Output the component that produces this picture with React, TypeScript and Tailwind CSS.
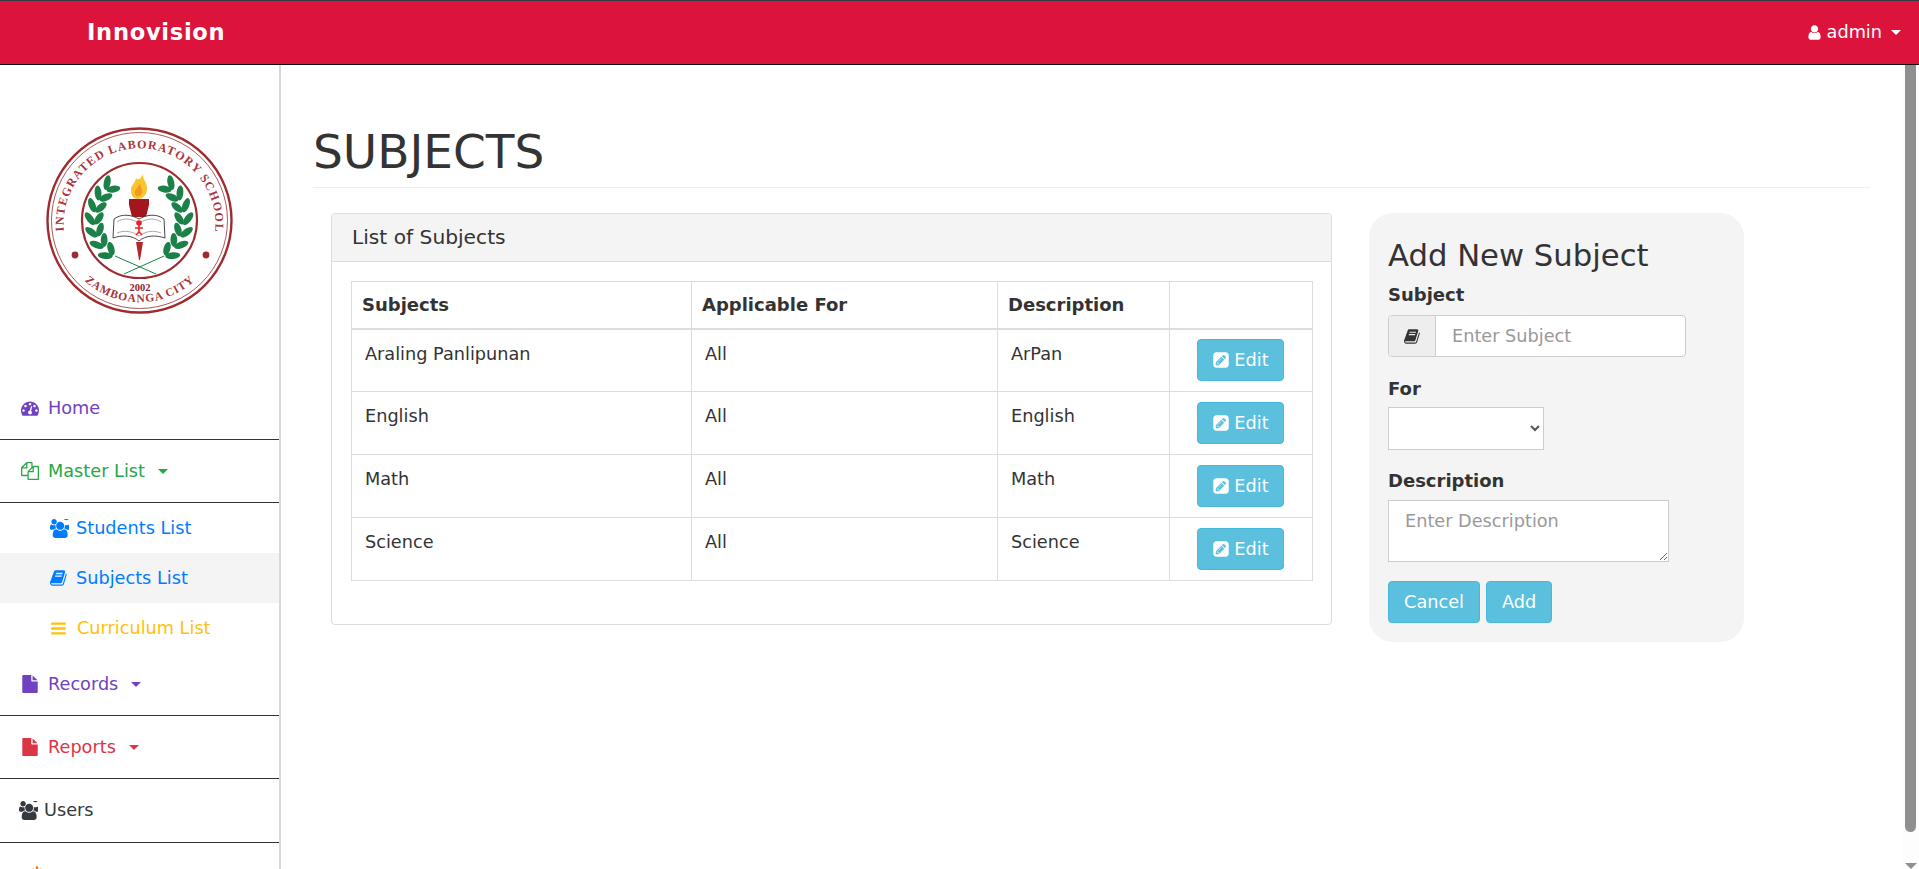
import React from 'react';

// Font Awesome 4 glyphs, the set the page uses
const paths = {
  book: 'M1639 478q40 57 18 129l-275 906q-19 64-76.5 107.5t-122.5 43.5h-923q-77 0-148.5-53.5t-99.5-131.5q-24-67-2-127 0-4 3-27t4-37q1-8-3-21.5t-3-19.5q2-11 8-21t16.5-23.5 16.5-23.5q23-38 45-91.5t30-91.5q3-10 .5-30t-.5-28q3-11 17-28t17-23q21-36 42-92t25-90q1-9-2.5-32t.5-28q4-13 22-30.5t22-22.5q19-26 42.5-84.5t27.5-96.5q1-8-3-25.5t-2-26.5q2-8 9-18t18-23 17-21q8-12 16.5-30.5t15-35 16-36 19.5-32 26.5-23.5 36-11.5 47.5 5.5l-1 3q38-9 51-9h761q74 0 114 56t18 130l-274 906q-36 119-71.5 153.5t-128.5 34.5h-869q-27 0-38 15-11 16-1 43 24 70 144 70h923q29 0 56-15.5t35-41.5l300-987q7-22 5-57 38 15 59 43zm-1064 2q-4 13 2 22.5t20 9.5h608q13 0 25.5-9.5t16.5-22.5l21-64q4-13-2-22.5t-20-9.5h-608q-13 0-25.5 9.5t-16.5 22.5zm-83 256q-4 13 2 22.5t20 9.5h608q13 0 25.5-9.5t16.5-22.5l21-64q4-13-2-22.5t-20-9.5h-608q-13 0-25.5 9.5t-16.5 22.5z',
  files: 'M1696 384q40 0 68 28t28 68v1216q0 40-28 68t-68 28h-960q-40 0-68-28t-28-68v-288h-544q-40 0-68-28t-28-68v-672q0-40 20-88t48-76l408-408q28-28 76-48t88-20h416q40 0 68 28t28 68v328q68-40 128-40h416zm-544 213l-299 299h299v-299zm-640-384l-299 299h299v-299zm196 647l316-316v-416h-384v416q0 40-28 68t-68 28h-416v640h512v-256q0-40 20-88t48-76zm956 804v-1152h-384v416q0 40-28 68t-68 28h-416v640h896z',
  users: 'M593 896q-162 5-265 128h-134q-82 0-138-40.5t-56-118.5q0-353 124-353 6 0 43.5 21t97.5 42.5 119 21.5q67 0 133-23-5 37-5 66 0 139 81 256zm1071 637q0 120-73 189.5t-194 69.5h-874q-121 0-194-69.5t-73-189.5q0-53 3.5-103.5t14-109 26.5-108.5 43-97.5 62-81 85.5-53.5 111.5-20q10 0 43 21.5t73 48 107 48 135 21.5 135-21.5 107-48 73-48 43-21.5q61 0 111.5 20t85.5 53.5 62 81 43 97.5 26.5 108.5 14 109 3.5 103.5zm-1024-1277q0 106-75 181t-181 75-181-75-75-181 75-181 181-75 181 75 75 181zm704 384q0 159-112.5 271.5t-271.5 112.5-271.5-112.5-112.5-271.5 112.5-271.5 271.5-112.5 271.5 112.5 112.5 271.5zm576 225q0 78-56 118.5t-138 40.5h-134q-103-123-265-128 81-117 81-256 0-29-5-66 66 23 133 23 59 0 119-21.5t97.5-42.5 43.5-21q124 0 124 353zm-128-993q0 106-75 181t-181 75-181-75-75-181 75-181 181-75 181 75 75 181z',
  user: 'M1536 1399q0 109-62.5 187t-150.5 78h-854q-88 0-150.5-78t-62.5-187q0-85 8.5-160.5t31.5-152 58.5-131 94-89 134.5-34.5q131 128 313 128t313-128q76 0 134.5 34.5t94 89 58.5 131 31.5 152 8.5 160.5zm-256-887q0 159-112.5 271.5t-271.5 112.5-271.5-112.5-112.5-271.5 112.5-271.5 271.5-112.5 271.5 112.5 112.5 271.5z',
  edit: 'M532 1108l152 152-52 52h-56v-96h-96v-56zm414-390q14 13-3 30l-291 291q-17 17-30 3-14-13 3-30l291-291q17-17 30-3zm-274 690l544-544-288-288-544 544v288h288zm608-608l92-92q28-28 28-68t-28-68l-152-152q-28-28-68-28t-68 28l-92 92 288 288zm384-384v960q0 119-84.5 203.5t-203.5 84.5h-960q-119 0-203.5-84.5t-84.5-203.5v-960q0-119 84.5-203.5t203.5-84.5h960q119 0 203.5 84.5t84.5 203.5z',
  dashboard: 'M384 1152q0-53-37.5-90.5t-90.5-37.5-90.5 37.5-37.5 90.5 37.5 90.5 90.5 37.5 90.5-37.5 37.5-90.5zm192-448q0-53-37.5-90.5t-90.5-37.5-90.5 37.5-37.5 90.5 37.5 90.5 90.5 37.5 90.5-37.5 37.5-90.5zm428 481l101-382q6-26-7.5-48.5t-38.5-29.5-48 6.5-30 39.5l-101 382q-60 5-107 43.5t-63 98.5q-20 77 20 146t117 89 146-20 89-117q16-60-6-117t-72-91zm660-33q0-53-37.5-90.5t-90.5-37.5-90.5 37.5-37.5 90.5 37.5 90.5 90.5 37.5 90.5-37.5 37.5-90.5zm-640-640q0-53-37.5-90.5t-90.5-37.5-90.5 37.5-37.5 90.5 37.5 90.5 90.5 37.5 90.5-37.5 37.5-90.5zm448 192q0-53-37.5-90.5t-90.5-37.5-90.5 37.5-37.5 90.5 37.5 90.5 90.5 37.5 90.5-37.5 37.5-90.5zm320 448q0 261-141 483-19 29-54 29h-1402q-35 0-54-29-141-221-141-483 0-182 71-348t191-286 286-191 348-71 348 71 286 191 191 286 71 348z',
  bars: 'M1664 1344v128q0 26-19 45t-45 19h-1408q-26 0-45-19t-19-45v-128q0-26 19-45t45-19h1408q26 0 45 19t19 45zm0-512v128q0 26-19 45t-45 19h-1408q-26 0-45-19t-19-45v-128q0-26 19-45t45-19h1408q26 0 45 19t19 45zm0-512v128q0 26-19 45t-45 19h-1408q-26 0-45-19t-19-45v-128q0-26 19-45t45-19h1408q26 0 45 19t19 45z',
  file: 'M1152 512v-472q22 14 36 28l408 408q14 14 28 36h-472zm-128 32q0 40 28 68t68 28h544v1056q0 40-28 68t-68 28h-1344q-40 0-68-28t-28-68v-1600q0-40 28-68t68-28h800v544z',
  power: 'M1664 896q0 156-61 298t-164 245-245 164-298 61-298-61-245-164-164-245-61-298q0-182 80.5-343t226.5-270q43-32 95.5-25t83.5 50q32 42 24.5 94.5t-49.5 84.5q-98 74-151.5 181t-53.5 228q0 104 40.5 198.5t109.5 163.5 163.5 109.5 198.5 40.5 198.5-40.5 163.5-109.5 109.5-163.5 40.5-198.5q0-121-53.5-228t-151.5-181q-42-32-49.5-84.5t24.5-94.5q31-43 84-50t95 25q146 109 226.5 270t80.5 343zm-640-768v640q0 52-38 90t-90 38-90-38-38-90v-640q0-52 38-90t90-38 90 38 38 90z',
};

const Icon = ({ name, size = 18, className = '' }: { name: keyof typeof paths; size?: number; className?: string }) => (
  <svg width={size} height={size} viewBox="0 0 1792 1792" fill="currentColor" className={`shrink-0 ${className}`}>
    <path d={paths[name]} />
  </svg>
);

const Caret = () => (
  <span className="inline-block w-0 h-0 border-x-[5px] border-t-[5px] border-x-transparent border-t-current" />
);

// laurel leaves, positions along an arc round the crest
const leaves = [134, 150, 166, 182, 198, 214, 230].map(a => {
  const r = (a * Math.PI) / 180;
  return { a, x: 93 + 44 * Math.cos(r), y: 93 - 44 * Math.sin(r) };
});

const Laurel = () => (
  <g fill="#1b8148">
    {leaves.map(l => (
      <g key={l.a} transform={`rotate(${90 - l.a} ${l.x} ${l.y})`}>
        <ellipse cx={l.x + 3} cy={l.y - 5} rx="7.5" ry="3.4" transform={`rotate(-35 ${l.x + 3} ${l.y - 5})`} />
        <ellipse cx={l.x + 3} cy={l.y + 4} rx="7" ry="3.4" transform={`rotate(35 ${l.x + 3} ${l.y + 4})`} />
      </g>
    ))}
  </g>
);

const Logo = () => (
  <svg width="187" height="187" viewBox="0 0 187 187">
    <defs>
      <path id="arc-top" d="M 18 106 A 76 76 0 1 1 169 106" />
      <path id="arc-bottom" d="M 24.5 137 A 81.5 81.5 0 0 0 162.5 137" />
    </defs>
    <circle cx="93.5" cy="93.5" r="92" fill="#fff" stroke="#9e2b2f" strokeWidth="2.4" />
    <circle cx="93.5" cy="93.5" r="88" fill="none" stroke="#9e2b2f" strokeWidth="0.8" />
    <circle cx="93.5" cy="93.5" r="57.5" fill="none" stroke="#9e2b2f" strokeWidth="2.2" />
    <text fontFamily="'Liberation Serif', serif" fontWeight="700" fontSize="12" fill="#a8353a">
      <textPath href="#arc-top" startOffset="2" textLength="252" lengthAdjust="spacing">INTEGRATED LABORATORY SCHOOL</textPath>
    </text>
    <text fontFamily="'Liberation Serif', serif" fontWeight="700" fontSize="11.5" fill="#a8353a">
      <textPath href="#arc-bottom" startOffset="22" textLength="120" lengthAdjust="spacing">ZAMBOANGA CITY</textPath>
    </text>
    <text x="94" y="163.5" textAnchor="middle" fontFamily="'Liberation Serif', serif" fontWeight="700" fontSize="10.5" fill="#8f2226">2002</text>
    <circle cx="29" cy="128" r="3.4" fill="#9e2b2f" />
    <circle cx="160" cy="128" r="3.4" fill="#9e2b2f" />
    <Laurel />
    <g transform="translate(186 0) scale(-1 1)">
      <Laurel />
    </g>
    <path d="M69 129 L110 147 M118 129 L78 147" stroke="#1b8148" strokeWidth="1" fill="none" />
    <path d="M90 115 H97 L94 133 H93 Z" fill="#b3262a" />
    <path d="M97 47 C97 54 102 56 101 63 C100 69 96 72 92 72 C87 72 85 68 85 63 C85 58 89 57 90 51 C92 54 95 52 97 47 Z" fill="#f7c52e" />
    <path d="M94 56 C94 60 97 62 96 66 C95 70 90 71 89 67 C88 63 92 61 94 56 Z" fill="#f29a1f" />
    <path d="M83 72 H103 V78 L100 90 H86 L83 78 Z" fill="#a3161d" />
    <path d="M68 92 C76 86 86 88 93 92 C100 88 110 86 118 92 L119 111 C110 108 100 108 93 114 C86 108 76 108 67 111 Z" fill="#fff" stroke="#333" strokeWidth="0.9" />
    <path d="M71 95 C78 90 86 92 93 96 C100 92 108 90 115 95 M71 106 C78 103 86 104 93 109 C100 104 108 103 115 106" stroke="#555" strokeWidth="0.5" fill="none" />
    <circle cx="93" cy="96" r="2.8" fill="#ea2027" />
    <path d="M93 98 V105 M89 101 H97 M93 105 L90 108 M93 105 L96 108" stroke="#ea2027" strokeWidth="1.6" fill="none" />
  </svg>
);

const subjects = [
  { name: 'Araling Panlipunan', desc: 'ArPan' },
  { name: 'English', desc: 'English' },
  { name: 'Math', desc: 'Math' },
  { name: 'Science', desc: 'Science' },
];

const App: React.FC = () => {
  return (
    <div className="h-screen flex flex-col overflow-hidden bg-white text-[#333] text-[17.7px] font-['DejaVu_Sans',sans-serif]">
      {/* Navbar */}
      <div className="h-[65px] shrink-0 bg-[#dc143c] border-t border-t-[#343a40] border-b border-b-[#111] flex items-center justify-between pl-[87px] pr-[18px] text-white">
        <span className="text-[22.6px] font-bold tracking-[0.7px]">Innovision</span>
        <span className="flex items-center">
          <Icon name="user" size={17} className="mr-[4px]" />
          <span>admin</span>
          <span className="ml-[9px] flex"><Caret /></span>
        </span>
      </div>

      <div className="flex-1 flex min-h-0">
        {/* Sidebar */}
        <div className="w-[281px] shrink-0 border-r-2 border-r-[#d8d8d8] overflow-hidden">
          <div className="h-[312px] pt-[62px] pl-[46px]">
            <Logo />
          </div>
          <div className="h-[63px] flex items-center pl-[21px] border-b border-b-[#333] text-[#6f42c1]">
            <Icon name="dashboard" size={18} className="mr-[9px]" />Home
          </div>
          <div className="h-[63px] flex items-center pl-[21px] border-b border-b-[#333] text-[#28a745]">
            <Icon name="files" size={18} className="mr-[9px]" />Master List
            <span className="ml-[13px] flex"><Caret /></span>
          </div>
          <div className="h-[50px] flex items-center pl-[50px] text-[#007bff]">
            <Icon name="users" size={19} className="mr-[7px]" />Students List
          </div>
          <div className="h-[50px] flex items-center pl-[50px] text-[#007bff] bg-[#f4f4f4]">
            <Icon name="book" size={18} className="mr-[8px]" />Subjects List
          </div>
          <div className="h-[50px] flex items-center pl-[50px] text-[#ffc107]">
            <Icon name="bars" size={17} className="mr-[10px]" />Curriculum List
          </div>
          <div className="h-[63px] flex items-center pl-[21px] border-b border-b-[#333] text-[#6f42c1]">
            <Icon name="file" size={18} className="mr-[9px]" />Records
            <span className="ml-[13px] flex"><Caret /></span>
          </div>
          <div className="h-[63px] flex items-center pl-[21px] border-b border-b-[#333] text-[#dc3545]">
            <Icon name="file" size={18} className="mr-[9px]" />Reports
            <span className="ml-[13px] flex"><Caret /></span>
          </div>
          <div className="h-[64px] flex items-center pl-[19px] border-b border-b-[#333] text-[#343a40]">
            <Icon name="users" size={19} className="mr-[6px]" />Users
          </div>
          <div className="h-[63px] flex items-center pl-[28px] text-[#fd7e14]">
            <Icon name="power" size={18} />
          </div>
        </div>

        {/* Main */}
        <div className="flex-1 min-w-0 px-[32px]">
          <h1 className="mt-[62px] h-[61px] border-b border-b-[#eee] text-[47px] leading-[50px] font-normal">SUBJECTS</h1>
          <div className="flex items-start mt-[25px] pl-[18px]">
            <div className="w-[1001px] h-[412px] border border-[#ddd] rounded-[4px] overflow-hidden">
              <div className="h-[48px] bg-[#f4f4f4] border-b border-b-[#ddd] pl-[20px] flex items-center text-[20.2px]">List of Subjects</div>
              <div className="px-[19px] pt-[19px]">
                <table className="w-[961px] border-collapse table-fixed border border-[#ddd]">
                  <colgroup>
                    <col className="w-[340px]" />
                    <col className="w-[306px]" />
                    <col className="w-[172px]" />
                    <col className="w-[143px]" />
                  </colgroup>
                  <thead>
                    <tr className="h-[47px] border-b-2 border-b-[#ddd] text-[18px]">
                      <th className="border border-[#ddd] pl-[10px] text-left font-bold">Subjects</th>
                      <th className="border border-[#ddd] pl-[10px] text-left font-bold">Applicable For</th>
                      <th className="border border-[#ddd] pl-[10px] text-left font-bold">Description</th>
                      <th className="border border-[#ddd]"></th>
                    </tr>
                  </thead>
                  <tbody>
                    {subjects.map(s => (
                      <tr key={s.name} className="h-[63px]">
                        <td className="border border-[#ddd] pl-[13px] pt-[11px] align-top">{s.name}</td>
                        <td className="border border-[#ddd] pl-[13px] pt-[11px] align-top">All</td>
                        <td className="border border-[#ddd] pl-[13px] pt-[11px] align-top">{s.desc}</td>
                        <td className="border border-[#ddd] pl-[27px] align-middle">
                          <button className="w-[87px] h-[42px] bg-[#5bc0de] border border-[#46b8da] rounded-[4px] text-white flex items-center justify-center">
                            <Icon name="edit" size={18} className="mr-[4px]" />Edit
                          </button>
                        </td>
                      </tr>
                    ))}
                  </tbody>
                </table>
              </div>
            </div>

            {/* Add form */}
            <div className="ml-[37px] w-[375px] h-[429px] bg-[#f4f4f4] rounded-[24px] pl-[19px] pt-[26px]">
              <h3 className="text-[30.7px] leading-[33px] font-normal">Add New Subject</h3>
              <label className="block mt-[11px] h-[32px] leading-[24px] font-bold text-[18px]">Subject</label>
              <div className="flex w-[298px] h-[42px] border border-[#ccc] rounded-[4px] bg-white overflow-hidden">
                <span className="w-[47px] bg-[#eee] border-r border-r-[#ccc] flex items-center justify-center text-[#333]">
                  <Icon name="book" size={17} />
                </span>
                <input placeholder="Enter Subject" className="flex-1 min-w-0 pl-[16px] outline-none placeholder:text-[#999]" />
              </div>
              <label className="block mt-[20px] h-[30px] leading-[24px] font-bold text-[18px]">For</label>
              <select className="block w-[156px] h-[43px] border border-[#ccc] bg-white text-[#555]"></select>
              <label className="block mt-[19px] h-[31px] leading-[24px] font-bold text-[18px]">Description</label>
              <textarea placeholder="Enter Description" className="block w-[281px] h-[62px] border border-[#ccc] bg-white pl-[16px] pt-[7px] outline-none placeholder:text-[#999]"></textarea>
              <div className="flex gap-[6px] mt-[19px]">
                <button className="w-[92px] h-[42px] bg-[#5bc0de] border border-[#46b8da] rounded-[4px] text-white">Cancel</button>
                <button className="w-[66px] h-[42px] bg-[#5bc0de] border border-[#46b8da] rounded-[4px] text-white">Add</button>
              </div>
            </div>
          </div>
        </div>

        {/* Scrollbar */}
        <div className="w-[17px] shrink-0 bg-[#fdfdfd] flex flex-col items-center">
          <div className="w-[11px] h-[767px] bg-[#8f8f8f] rounded-b-[6px]" />
          <div className="mt-[31px] w-0 h-0 border-x-[6px] border-t-[6px] border-x-transparent border-t-[#8f8f8f]" />
        </div>
      </div>
    </div>
  );
};

export default App;
